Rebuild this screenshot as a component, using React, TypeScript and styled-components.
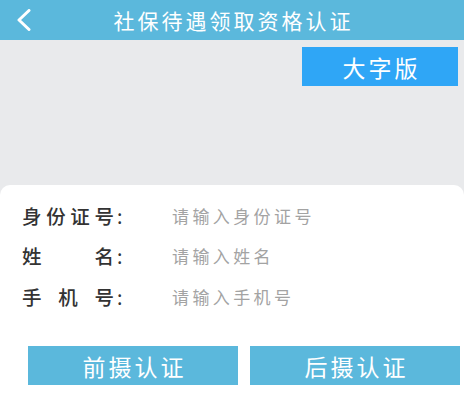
import styled, { createGlobalStyle } from 'styled-components';

const GlobalStyle = createGlobalStyle`
  html, body {
    margin: 0;
    padding: 0;
    background: #ffffff;
    font-family: "Noto Sans CJK SC", "Noto Sans", sans-serif;
  }
`;

const Page = styled.div`
  width: 464px;
  height: 397px;
  display: flex;
  flex-direction: column;
  background: #e9eaec;
  overflow: hidden;
`;

const Header = styled.header`
  height: 40px;
  background: #5bb8dc;
  display: grid;
  grid-template-columns: 48px 1fr 48px;
  align-items: center;
  flex-shrink: 0;
`;

const BackButton = styled.div`
  height: 40px;
  display: flex;
  align-items: center;
  padding-left: 16px;
`;

const Title = styled.h1`
  margin: 0;
  text-align: center;
  font-size: 21px;
  font-weight: 400;
  color: #ffffff;
  letter-spacing: 3px;
  padding-left: 3px;
`;

const Toolbar = styled.div`
  height: 145px;
  display: flex;
  justify-content: flex-end;
  align-items: flex-start;
  padding: 7px 6px 0 0;
  box-sizing: border-box;
  flex-shrink: 0;
`;

const BigFontButton = styled.button`
  width: 156px;
  height: 39px;
  border: none;
  background: #2fa6f6;
  color: #ffffff;
  font-family: inherit;
  font-size: 23px;
  padding: 0 0 0 3px;
  letter-spacing: 3px;
`;

const Card = styled.section`
  flex: 1;
  background: #ffffff;
  border-radius: 10px 10px 0 0;
  padding: 10px 0 0 22px;
  display: flex;
  flex-direction: column;
`;

const Row = styled.div`
  height: 40.5px;
  display: flex;
  align-items: center;
`;

const Label = styled.span`
  width: 150px;
  display: flex;
  align-items: center;
  font-size: 19.5px;
  font-weight: 500;
  color: #333333;
`;

const LabelText = styled.span`
  width: 92px;
  display: flex;
  justify-content: space-between;
`;

const Colon = styled.span`
  margin-left: 3px;
  font-weight: 400;
`;

const Placeholder = styled.span`
  font-size: 17px;
  color: #a3a3a3;
  letter-spacing: 3.4px;
`;

const Actions = styled.div`
  display: flex;
  gap: 12px;
  margin: 29.5px 0 0 6px;
`;

const ActionButton = styled.button`
  width: 210px;
  height: 39px;
  border: none;
  background: #5bb8dc;
  color: #ffffff;
  font-family: inherit;
  font-size: 23px;
  padding: 0 0 0 3px;
  letter-spacing: 3px;
`;

const fields = [
  { label: '身份证号', hint: '请输入身份证号' },
  { label: '姓名', hint: '请输入姓名' },
  { label: '手机号', hint: '请输入手机号' },
];

const App = () => {
  return (
    <>
      <GlobalStyle />
      <Page>
        <Header>
          <BackButton>
            <svg width="16" height="22" viewBox="0 0 16 22">
              <path d="M13 1.5 L3 11 L13 20.5" fill="none" stroke="#ffffff" strokeWidth="3" strokeLinecap="round" strokeLinejoin="round" />
            </svg>
          </BackButton>
          <Title>社保待遇领取资格认证</Title>
        </Header>
        <Toolbar>
          <BigFontButton>大字版</BigFontButton>
        </Toolbar>
        <Card>
          {fields.map((f) => (
            <Row key={f.hint}>
              <Label>
                <LabelText>
                  {f.label.split('').map((c, i) => (
                    <span key={i}>{c}</span>
                  ))}
                </LabelText>
                <Colon>:</Colon>
              </Label>
              <Placeholder>{f.hint}</Placeholder>
            </Row>
          ))}
          <Actions>
            <ActionButton>前摄认证</ActionButton>
            <ActionButton>后摄认证</ActionButton>
          </Actions>
        </Card>
      </Page>
    </>
  );
};

export default App;
